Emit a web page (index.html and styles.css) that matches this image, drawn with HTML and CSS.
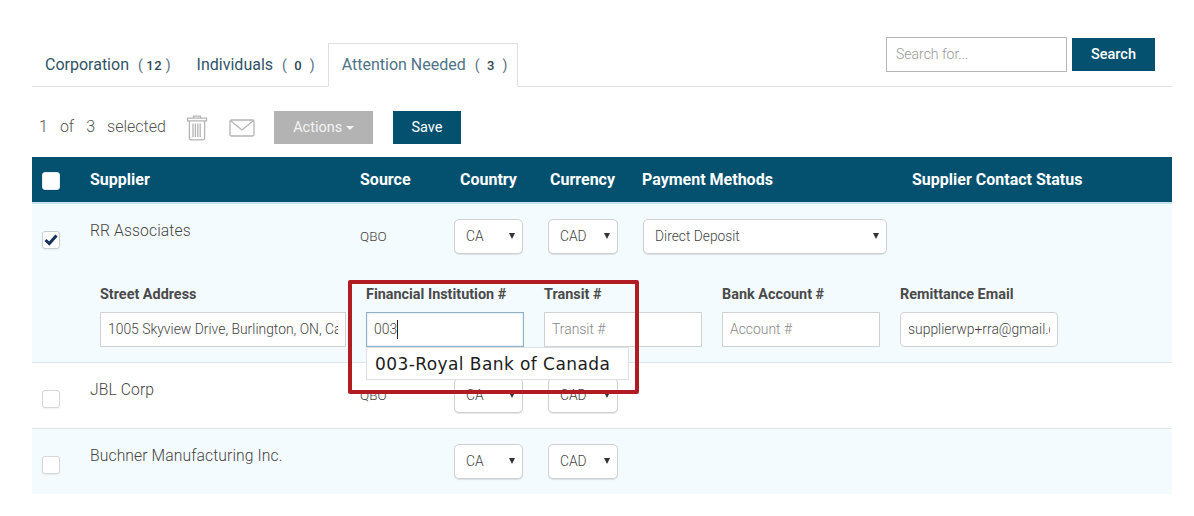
FILE: index.html
```html
<!DOCTYPE html>
<html lang="en">
<head>
<meta charset="utf-8">
<title>Suppliers</title>
<link rel="stylesheet" href="styles.css">
</head>
<body>
<main class="page">
  <div class="tabbar">
    <nav class="tabs">
      <a class="tab">Corporation <span class="count">(<b>12</b>)</span></a>
      <a class="tab">Individuals <span class="count">(<b>0</b>)</span></a>
      <a class="tab active">Attention Needed <span class="count">(<b>3</b>)</span></a>
    </nav>
    <form class="search">
      <input class="search-input" placeholder="Search for...">
      <button type="button" class="btn btn-search">Search</button>
    </form>
  </div>

  <div class="toolbar">
    <span class="selected"><span>1</span><span>of</span><span>3</span><span>selected</span></span>
    <svg class="icon-trash" width="22" height="26" viewBox="0 0 22 26" fill="none" stroke="#b4b4b4" stroke-width="1.3">
      <path d="M7.5 3V1.2h7V3"/>
      <path d="M1.5 3.2h19v2.6h-19z"/>
      <path d="M3.4 6v17.2a1.6 1.6 0 0 0 1.6 1.6h12a1.6 1.6 0 0 0 1.6-1.6V6"/>
      <path d="M7 8.5v13.5M9.4 8.5v13.5M11.8 8.5v13.5M14.2 8.5v13.5"/>
    </svg>
    <svg class="icon-mail" width="26" height="18" viewBox="0 0 26 18" fill="none" stroke="#b4b4b4" stroke-width="1.3">
      <rect x="1" y="1" width="24" height="16" rx="1.5"/>
      <path d="M2 2l11 9 11-9"/>
    </svg>
    <button type="button" class="btn btn-actions">Actions <i class="caret-up"></i></button>
    <button type="button" class="btn btn-save">Save</button>
  </div>

  <section class="table">
    <header class="thead">
      <span class="check check-head"></span>
      <span>Supplier</span>
      <span>Source</span>
      <span>Country</span>
      <span>Currency</span>
      <span>Payment Methods</span>
      <span>Supplier Contact Status</span>
    </header>

    <div class="row tint row-open">
      <div class="cells">
        <span class="check checked">
          <svg width="14" height="12" viewBox="0 0 14 12"><path d="M1.5 6l3.8 3.6 7.2-8" fill="none" stroke="#16325c" stroke-width="3"/></svg>
        </span>
        <span class="name">RR Associates</span>
        <span class="source">QBO</span>
        <div class="select sel-country"><span>CA</span><i class="arrow"></i></div>
        <div class="select sel-currency"><span>CAD</span><i class="arrow"></i></div>
        <div class="select sel-payment"><span>Direct Deposit</span><i class="arrow"></i></div>
      </div>
      <div class="details">
        <label class="field field-wide"><span class="field-label">Street Address</span>
          <input class="input" value="1005 Skyview Drive, Burlington, ON, Canada"></label>
        <div class="field"><span class="field-label">Financial Institution #</span>
          <div class="input input-focus"><span>003</span><i class="cursor"></i></div>
          <div class="suggest">003-Royal Bank of Canada</div>
        </div>
        <label class="field"><span class="field-label">Transit #</span>
          <input class="input" placeholder="Transit #"></label>
        <label class="field"><span class="field-label">Bank Account #</span>
          <input class="input" placeholder="Account #"></label>
        <label class="field"><span class="field-label">Remittance Email</span>
          <input class="input input-round" value="supplierwp+rra@gmail.com"></label>
      </div>
    </div>

    <div class="row">
      <div class="cells">
        <span class="check"></span>
        <span class="name">JBL Corp</span>
        <span class="source">QBO</span>
        <div class="select sel-country"><span>CA</span><i class="arrow"></i></div>
        <div class="select sel-currency"><span>CAD</span><i class="arrow"></i></div>
      </div>
    </div>

    <div class="row tint row-last">
      <div class="cells">
        <span class="check"></span>
        <span class="name">Buchner Manufacturing Inc.</span>
        <span class="source"></span>
        <div class="select sel-country"><span>CA</span><i class="arrow"></i></div>
        <div class="select sel-currency"><span>CAD</span><i class="arrow"></i></div>
      </div>
    </div>

    <div class="callout"></div>
  </section>
</main>
</body>
</html>
```

FILE: styles.css
```css
* { box-sizing: border-box; }
html, body { margin: 0; height: 100%; background: #fff; overflow: hidden; }
body { font-family: Roboto, "Liberation Sans", sans-serif; color: #444; }
.page { padding: 37px 22px 0 32px; }

/* tabs + search */
.tabbar { display: flex; justify-content: space-between; align-items: flex-start; height: 50px; border-bottom: 1px solid #e0e0e0; }
.tabs { display: flex; margin-top: 6px; height: 44px; }
.tab { display: block; padding: 12px 12px 0 13px; font-size: 16px; line-height: 20px; color: #2f5368; white-space: pre; }
.tabs .tab:nth-child(2) { padding: 12px 13px 0 14px; }
.tab.active { color: #4f7386; background: #fff; border: 1px solid #e0e0e0; border-bottom-color: #fff; padding: 11px 10px 0 13px !important; height: 44px; }
.count { font-size: 14px; margin-left: 5px; color: #55707f; }
.count b { display: inline-block; width: 23px; text-align: center; font-weight: 500; color: #2f4858; font-size: 13px; letter-spacing: .6px; }
.search { display: flex; align-items: flex-start; gap: 5px; margin-right: 17px; }
.search-input { width: 181px; height: 35px; border: 1px solid #b5b5b5; padding: 0 9px 2px; font: 300 14px Roboto, sans-serif; outline: 0; }
.search-input::placeholder { color: #999; }

.btn { border: 0; border-radius: 0; color: #fff; font: 400 14.5px Roboto, sans-serif; padding: 0; }
.btn-search { width: 83px; height: 33px; margin-top: 1px; background: #03506f; font-weight: 500; }

/* toolbar */
.toolbar { display: flex; align-items: center; height: 33px; margin-top: 24px; }
.selected { display: flex; gap: 12px; width: 154px; padding-left: 7px; margin-top: -2px; font-size: 16px; font-weight: 300; color: #555; }
.icon-trash { margin-right: 21px; }
.icon-mail { margin-right: 19px; }
.btn-actions { width: 99px; height: 33px; background: #b3b3b3; margin-right: 20px; color: #f4f4f4; }
.btn-save { width: 68px; height: 33px; background: #03506f; }
.caret-up { display: inline-block; vertical-align: 2px; border: 4px solid transparent; border-top-color: #f4f4f4; border-bottom: 0; }

/* table */
.table { position: relative; margin-top: 13px; }
.thead { display: grid; grid-template-columns: 58px 270px 100px 90px 92px 270px 1fr; align-items: center; height: 47px; background: #03506f; border-bottom: 2px solid #c5e3ef; color: #fff; font-size: 16px; font-weight: 700; }
.check { display: flex; align-items: center; justify-content: center; width: 18px; height: 18px; margin-left: 10px; background: #fff; border: 1px solid #d6d6d6; border-radius: 3px; box-shadow: 0 1px 2px rgba(0,0,0,.06); }
.check-head { border-color: #e4eef3; margin-top: 3px; }
.checked { border-color: #c9cdd2; }
.row { border-bottom: 1px solid #dfe4e8; height: 66px; }
.row-last { border-bottom: 0; height: 65px; }
.tint { background: #f4fbfe; }
.row-open { height: 159px; }
.cells { display: grid; grid-template-columns: 58px 270px 94px 94px 95px auto; height: 65px; padding-top: 15px; align-items: start; }
.cells .check { margin-top: 12px; }
.name { margin-top: 1px; font-size: 15.7px; font-weight: 300; line-height: 22px; color: #444; letter-spacing: .1px; }
.source { font-size: 13.5px; font-weight: 300; margin-top: 9px; line-height: 16px; color: #444; }
.select { display: flex; align-items: center; justify-content: space-between; height: 35px; padding: 0 7px 1px 11px; background: #fff; border: 1px solid #d0d0d0; border-radius: 5px; box-shadow: 0 1px 1px rgba(0,0,0,.1); font-size: 13.8px; font-weight: 300; color: #444; }
.sel-country { width: 69px; }
.sel-currency { width: 70px; }
.sel-payment { width: 244px; }
.arrow { border: 3.5px solid transparent; border-top: 6px solid #333; border-bottom: 0; }

/* detail row */
.details { display: flex; gap: 20px; padding: 18px 0 0 68px; }
.field { position: relative; display: flex; flex-direction: column; gap: 9px; width: 158px; }
.field-wide { width: 246px; }
.field-label { font-size: 14.4px; line-height: 16px; font-weight: 700; color: #4a4a4a; white-space: nowrap; }
.input { display: flex; align-items: center; width: 100%; height: 35px; padding: 0 7px 1px; background: #fff; border: 1px solid #cfd3d6; font: 300 13.9px Roboto, sans-serif; color: #444; outline: 0; }
.input::placeholder { color: #888; }
.input-focus { border-color: #8fb0c6; box-shadow: inset 0 0 2px rgba(90,140,180,.4); }
.cursor { width: 1px; height: 19px; background: #222; }
.input-round { border-radius: 4px; }
.suggest { position: absolute; left: 0; top: 60px; z-index: 2; width: 263px; height: 33px; padding-left: 8px; background: #fff; border: 1px solid #dde0e2; font: 400 17px/32px "DejaVu Sans", sans-serif; letter-spacing: .42px; color: #1c1c1c; white-space: nowrap; }

.callout { position: absolute; left: 316px; top: 123px; z-index: 3; width: 291px; height: 114px; border: 4px solid #b01c22; border-radius: 2px; pointer-events: none; }
```
